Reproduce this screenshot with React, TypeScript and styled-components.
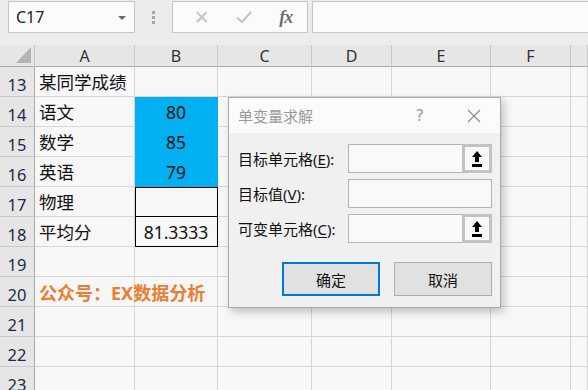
import React from "react";
import styled, { createGlobalStyle } from "styled-components";

const FONT = `"Noto Sans", "Noto Sans CJK SC", sans-serif`;

const GlobalStyle = createGlobalStyle`
  html, body {
    margin: 0;
    padding: 0;
    background: #f7f7f7;
    overflow: hidden;
  }
  body {
    font-family: ${FONT};
  }
`;

const COLUMNS = ["A", "B", "C", "D", "E", "F", ""];

type CellData = {
  text?: string;
  align?: "left" | "center";
  fill?: boolean;
  box?: "top" | "mid";
  accent?: boolean;
};

const ROWS: { num: number; cells: CellData[] }[] = [
  { num: 13, cells: [{ text: "某同学成绩" }] },
  { num: 14, cells: [{ text: "语文" }, { text: "80", align: "center", fill: true }] },
  { num: 15, cells: [{ text: "数学" }, { text: "85", align: "center", fill: true }] },
  { num: 16, cells: [{ text: "英语" }, { text: "79", align: "center", fill: true }] },
  { num: 17, cells: [{ text: "物理" }, { box: "top" }] },
  { num: 18, cells: [{ text: "平均分" }, { text: "81.3333", align: "center", box: "mid" }] },
  { num: 19, cells: [] },
  { num: 20, cells: [{ text: "公众号：EX数据分析", accent: true }] },
  { num: 21, cells: [] },
  { num: 22, cells: [] },
  { num: 23, cells: [] },
];

function App(): JSX.Element {
  return (
    <Page>
      <GlobalStyle />
      <FormulaBar>
        <NameBox>
          <span>C17</span>
          <DropArrow />
        </NameBox>
        <Grip>
          <i />
          <i />
          <i />
        </Grip>
        <FormulaButtons>
          <ToolGlyph>✕</ToolGlyph>
          <ToolGlyph>
            <svg width="18" height="14" viewBox="0 0 18 14">
              <path d="M2 7.5 L7 12 L16 2" fill="none" stroke="#c4c4c4" strokeWidth="2" />
            </svg>
          </ToolGlyph>
          <FxGlyph>fx</FxGlyph>
        </FormulaButtons>
        <FormulaInput />
      </FormulaBar>

      <Sheet>
        <Corner>
          <CornerTriangle />
        </Corner>
        {COLUMNS.map((col, i) => (
          <ColHeader key={`h${i}`}>{col}</ColHeader>
        ))}
        {ROWS.map((row) => (
          <React.Fragment key={row.num}>
            <RowHeader>{row.num}</RowHeader>
            {COLUMNS.map((_, ci) => {
              const cell = row.cells[ci] || {};
              return (
                <Cell
                  key={`${row.num}-${ci}`}
                  $align={cell.align || "left"}
                  $fill={!!cell.fill}
                  $box={cell.box}
                  $accent={!!cell.accent}
                >
                  {cell.text}
                </Cell>
              );
            })}
          </React.Fragment>
        ))}
      </Sheet>

      <Dialog>
        <TitleBar>
          <Title>单变量求解</Title>
          <TitleIcons>
            <span>?</span>
            <svg width="14" height="14" viewBox="0 0 14 14">
              <path d="M1 1 L13 13 M13 1 L1 13" stroke="#8a8a8a" strokeWidth="1.1" />
            </svg>
          </TitleIcons>
        </TitleBar>
        <DialogBody>
          <FieldGrid>
            <Label>
              目标单元格(<u>E</u>):
            </Label>
            <Field>
              <PickButton>
                <PickIcon />
              </PickButton>
            </Field>
            <Label>
              目标值(<u>V</u>):
            </Label>
            <Field />
            <Label>
              可变单元格(<u>C</u>):
            </Label>
            <Field>
              <PickButton>
                <PickIcon />
              </PickButton>
            </Field>
          </FieldGrid>
          <ButtonRow>
            <DialogButton $primary>确定</DialogButton>
            <DialogButton>取消</DialogButton>
          </ButtonRow>
        </DialogBody>
      </Dialog>
    </Page>
  );
}

function PickIcon(): JSX.Element {
  return (
    <svg width="12" height="18" viewBox="0 0 12 18">
      <path d="M6 1 L11 7 L8 7 L8 12 L4 12 L4 7 L1 7 Z" fill="#000" />
      <rect x="1" y="14" width="10" height="3" fill="#000" />
    </svg>
  );
}

export default App;

const Page = styled.div`
  position: relative;
  width: 588px;
  height: 390px;
  overflow: hidden;
  background: #f7f7f7;
`;

const FormulaBar = styled.div`
  height: 45px;
  box-sizing: border-box;
  padding: 1px 0 12px 8px;
  display: flex;
  align-items: stretch;
  background: #ececec;
`;

const NameBox = styled.div`
  width: 127px;
  box-sizing: border-box;
  border: 1px solid #c6c6c6;
  background: #fbfbfb;
  display: flex;
  align-items: center;
  justify-content: space-between;
  padding: 0 8px 0 7px;
  font-size: 16px;
  color: #222;
`;

const DropArrow = styled.i`
  width: 0;
  height: 0;
  border-left: 4px solid transparent;
  border-right: 4px solid transparent;
  border-top: 4px solid #6a6a6a;
  margin-top: 2px;
`;

const Grip = styled.div`
  width: 37px;
  display: flex;
  flex-direction: column;
  align-items: center;
  justify-content: center;
  gap: 2px;
  i {
    width: 3px;
    height: 3px;
    background: #a8a8a8;
  }
`;

const FormulaButtons = styled.div`
  width: 136px;
  box-sizing: border-box;
  border: 1px solid #c6c6c6;
  background: #fbfbfb;
  display: flex;
  align-items: center;
  justify-content: space-around;
  padding: 0 2px 0 8px;
`;

const ToolGlyph = styled.span`
  color: #c4c4c4;
  font-size: 19px;
  font-family: "DejaVu Sans", sans-serif;
  display: flex;
  align-items: center;
`;

const FxGlyph = styled.span`
  font-family: "Liberation Serif", serif;
  font-style: italic;
  font-weight: bold;
  font-size: 18px;
  letter-spacing: -1px;
  color: #6e6e6e;
`;

const FormulaInput = styled.div`
  flex: 1;
  margin-left: 4px;
  border: 1px solid #c6c6c6;
  border-right: none;
  background: #fbfbfb;
`;

const Sheet = styled.div`
  display: grid;
  grid-template-columns: 35px 100px 83px 94px 80px 99px 80px 1fr;
  grid-template-rows: 22px;
  grid-auto-rows: 30px;
`;

const Corner = styled.div`
  background: #e6e6e6;
  border-right: 1px solid #c9c9c9;
  border-bottom: 1px solid #ababab;
  position: relative;
`;

const CornerTriangle = styled.div`
  position: absolute;
  right: 3px;
  bottom: 3px;
  width: 0;
  height: 0;
  border-left: 15px solid transparent;
  border-bottom: 16px solid #b3b3b3;
`;

const ColHeader = styled.div`
  background: #e6e6e6;
  border-right: 1px solid #c9c9c9;
  border-bottom: 1px solid #ababab;
  display: flex;
  align-items: center;
  justify-content: center;
  font-size: 16px;
  color: #333;
`;

const RowHeader = styled.div`
  background: #e6e6e6;
  border-right: 1px solid #ababab;
  border-bottom: 1px solid #c9c9c9;
  display: flex;
  align-items: flex-end;
  justify-content: center;
  padding-bottom: 0;
  box-sizing: border-box;
  font-size: 16.5px;
  color: #1e2a44;
`;

const Cell = styled.div<{
  $align: "left" | "center";
  $fill: boolean;
  $box?: "top" | "mid";
  $accent: boolean;
}>`
  box-sizing: border-box;
  display: flex;
  align-items: center;
  justify-content: ${(p) => (p.$align === "center" ? "center" : "flex-start")};
  padding: 0 4px;
  white-space: nowrap;
  overflow: visible;
  font-size: ${(p) => (p.$accent ? "18px" : "17.5px")};
  font-weight: ${(p) => (p.$accent ? 700 : 400)};
  color: ${(p) => (p.$accent ? "#ed7d31" : "#111")};
  background: ${(p) => (p.$fill ? "#00b0f0" : "transparent")};
  border-right: 1px solid ${(p) => (p.$fill ? "#00b0f0" : p.$box ? "#000" : "#d6d6d6")};
  border-bottom: 1px solid ${(p) => (p.$fill ? "#00b0f0" : p.$box ? "#000" : "#d6d6d6")};
  box-shadow: ${(p) =>
    p.$box === "top"
      ? "inset 1px 0 0 #000, inset 0 1px 0 #000"
      : p.$box === "mid"
      ? "inset 1px 0 0 #000"
      : "none"};
`;

const Dialog = styled.div`
  position: absolute;
  left: 228px;
  top: 97px;
  width: 273px;
  height: 211px;
  box-sizing: border-box;
  border: 1px solid #a9a9a9;
  background: #f0f0f0;
  display: flex;
  flex-direction: column;
  box-shadow: 3px 4px 8px rgba(0, 0, 0, 0.22);
  font-family: ${FONT};
`;

const TitleBar = styled.div`
  height: 35px;
  background: #fbfbfb;
  display: flex;
  align-items: center;
  justify-content: space-between;
  padding: 0 19px 0 9px;
`;

const Title = styled.span`
  font-size: 15px;
  color: #9a9a9a;
`;

const TitleIcons = styled.div`
  display: flex;
  align-items: center;
  gap: 43px;
  span {
    font-size: 16px;
    color: #9a9a9a;
    font-family: "DejaVu Sans", sans-serif;
  }
`;

const DialogBody = styled.div`
  flex: 1;
  padding: 11px 7px 0 9px;
  display: flex;
  flex-direction: column;
`;

const FieldGrid = styled.div`
  display: grid;
  grid-template-columns: 110px 144px;
  grid-auto-rows: 29px;
  row-gap: 6px;
  align-items: center;
`;

const Label = styled.span`
  font-size: 15px;
  color: #111;
  u {
    text-underline-offset: 2px;
  }
`;

const Field = styled.div`
  height: 29px;
  box-sizing: border-box;
  border: 1px solid #b4b4b4;
  background: #f9f9f9;
  display: flex;
  justify-content: flex-end;
`;

const PickButton = styled.div`
  width: 30px;
  margin: -1px -1px -1px 0;
  box-sizing: border-box;
  border: 3px solid #c2c2c2;
  background: #f8f8f8;
  display: flex;
  align-items: center;
  justify-content: center;
`;

const ButtonRow = styled.div`
  display: flex;
  justify-content: flex-end;
  gap: 14px;
  margin-top: 19px;
  padding-right: 1px;
`;

const DialogButton = styled.button<{ $primary?: boolean }>`
  width: 98px;
  height: 34px;
  box-sizing: border-box;
  background: #e1e1e1;
  border: ${(p) => (p.$primary ? "2px solid #0078d7" : "1px solid #adadad")};
  font-family: ${FONT};
  font-size: 15px;
  color: #111;
  padding: 0;
`;
